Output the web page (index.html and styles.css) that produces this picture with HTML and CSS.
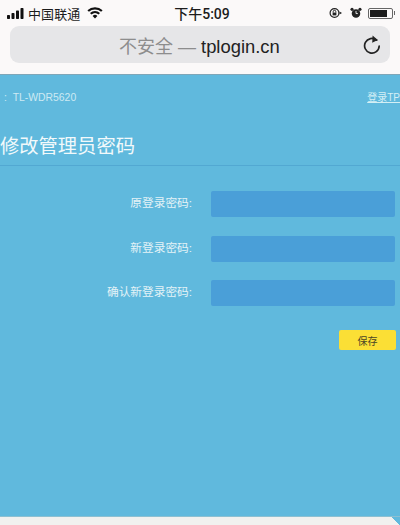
FILE: index.html
```html
<!DOCTYPE html>
<html lang="zh">
<head>
<meta charset="utf-8">
<title>tplogin.cn</title>
<link rel="stylesheet" href="styles.css">
</head>
<body>
<div class="phone">
  <header class="chrome">
    <div class="status">
      <div class="status-left">
        <svg class="signal" width="18" height="11" viewBox="0 0 18 11"><rect x="0" y="7" width="3" height="4" rx=".7"/><rect x="4.5" y="5" width="3" height="6" rx=".7"/><rect x="9" y="2.5" width="3" height="8.5" rx=".7"/><rect x="13.5" y="0" width="3" height="11" rx=".7"/></svg>
        <span class="carrier">中国联通</span>
        <svg class="wifi" width="16" height="12" viewBox="0 0 16 12"><path d="M8 11.6 5.6 8.9a3.5 3.5 0 0 1 4.8 0Z"/><path d="M4.4 7.6 3 6a7.4 7.4 0 0 1 10 0l-1.4 1.6a5.4 5.4 0 0 0-7.2 0Z"/><path d="M1.9 4.8.4 3.2a11.2 11.2 0 0 1 15.2 0l-1.5 1.6a9 9 0 0 0-12.2 0Z"/></svg>
      </div>
      <span class="time">下午5:09</span>
      <div class="status-right">
        <svg width="13" height="12" viewBox="0 0 13 12"><circle cx="5.5" cy="6" r="4.4" fill="none" stroke="#222" stroke-width="1.2"/><rect x="3.6" y="5.6" width="3.8" height="2.8" fill="#222"/><path d="M4.2 5.6V4.6a1.3 1.3 0 0 1 2.6 0v1" fill="none" stroke="#222"/><path d="M10.5 4.5 13 6l-2.5 1.5Z" fill="#222"/></svg>
        <svg width="12" height="12" viewBox="0 0 13 12"><circle cx="6.5" cy="6.5" r="4.6" fill="#222"/><circle cx="2.2" cy="2" r="1.7" fill="#222"/><circle cx="10.8" cy="2" r="1.7" fill="#222"/><path d="M6.5 3.8v2.8h2" fill="none" stroke="#fff" stroke-width=".9"/></svg>
        <div class="battery"><div class="battery-fill"></div></div>
        <div class="battery-cap"></div>
      </div>
    </div>
    <div class="address">
      <div class="url"><span class="insecure">不安全 — </span><span class="domain">tplogin.cn</span></div>
      <svg class="reload" width="18" height="20" viewBox="0 0 18 20"><path d="M13.6 5.2A7.3 7.3 0 1 0 16.2 11" fill="none" stroke="#222" stroke-width="1.7" stroke-linecap="round"/><path d="M9.6 0.6 14.8 4.9 9.2 7.8Z" fill="#222"/></svg>
    </div>
  </header>
  <main class="page">
    <div class="topline">
      <span class="model">:&nbsp;&nbsp;TL-WDR5620</span>
      <a class="login-link">登录TP</a>
    </div>
    <h1 class="title">修改管理员密码</h1>
    <form class="form">
      <div class="row"><label class="label">原登录密码:</label><div class="input"></div></div>
      <div class="row"><label class="label">新登录密码:</label><div class="input"></div></div>
      <div class="row"><label class="label">确认新登录密码:</label><div class="input"></div></div>
      <div class="actions"><button type="button" class="save">保存</button></div>
    </form>
  </main>
  <div class="bottom"><div class="corner"></div></div>
</div>
</body>
</html>
```
FILE: styles.css
```css
* { box-sizing: border-box; }
html, body { margin: 0; padding: 0; }
body {
  width: 400px;
  height: 525px;
  overflow: hidden;
  font-family: "Liberation Sans", "Noto Sans CJK SC", sans-serif;
  background: #f1f1ef;
}
.phone { display: flex; flex-direction: column; width: 400px; height: 525px; overflow: hidden; }

.chrome { height: 75px; flex: none; background: #fbf9f9; border-bottom: 1px solid #7fa6b8; }
.status {
  height: 25px;
  padding: 1px 5px 0 7px;
  display: grid;
  grid-template-columns: 1fr auto 1fr;
  align-items: center;
  color: #1c1c1c;
}
.status-left { display: flex; align-items: center; }
.signal { fill: #111; margin-right: 3px; }
.carrier { font-size: 13px; letter-spacing: .1px; }
.wifi { fill: #111; margin-left: 7px; }
.time { font-family: Roboto, "Noto Sans CJK SC", sans-serif; font-size: 14px; font-weight: 500; margin-left: 2px; }
.status-right { display: flex; align-items: center; justify-content: flex-end; }
.status-right svg { margin-right: 7px; }
.status-right svg:first-child { margin-right: 8px; }
.battery {
  width: 25px;
  height: 11px;
  border: 1px solid #666;
  border-radius: 2px;
  padding: 1px;
  margin-left: -1px;
}
.battery-fill { width: 17px; height: 100%; background: #1c1c1c; }
.battery-cap { width: 1px; height: 4px; margin-left: 1px; background: #666; }

.address {
  height: 37px;
  margin: 1px 10px 0;
  padding: 0 9px 0 0;
  background: #e6e6e8;
  border-radius: 9px;
  display: flex;
  align-items: center;
}
.url { flex: 1; padding-left: 109px; font-size: 18.4px; white-space: nowrap; }
.insecure { color: #8d8d8d; font-size: 18px; }
.domain { color: #222; }
.reload { flex: none; margin-top: 1px; }

.page {
  flex: 1;
  background: #60b9dd;
  color: #eef8fb;
  min-height: 0;
}
.topline {
  height: 45px;
  padding: 17px 0 0 4px;
  display: flex;
  justify-content: space-between;
  font-size: 10.4px;
  line-height: 12px;
  white-space: nowrap;
}
.model { color: #cdeaf3; }
.login-link { color: #d4eff5; text-decoration: underline; font-size: 10px; }
.title {
  margin: 0;
  height: 46px;
  padding-top: 14px;
  font-size: 19.3px;
  line-height: 26px;
  font-weight: 400;
  border-bottom: 1px solid #52a8d2;
  color: #f2f9fb;
}
.form { padding: 25px 5px 0 0; }
.row { display: flex; align-items: flex-start; height: 26px; margin-bottom: 18.5px; line-height: 24px; }
.label { width: 192px; flex: none; text-align: right; font-size: 11.7px; color: #e4f3f7; }
.input { margin-left: 19px; flex: 1; height: 26px; border-radius: 2px; background: #4a9fd8; }
.actions { display: flex; justify-content: flex-end; margin: 24px -1px 0 0; }
.save {
  width: 57px;
  height: 20px;
  padding: 0;
  border: 0;
  border-radius: 2px;
  background: #fbdf35;
  color: #4a4526;
  font: 10px "Liberation Sans", "Noto Sans CJK SC", sans-serif;
}
.bottom {
  height: 9px;
  flex: none;
  display: flex;
  justify-content: flex-end;
  background: #f1f1ef;
  border-top: 1px solid #8cc0d2;
}
.corner { width: 8px; height: 100%; background: linear-gradient(to top right, transparent 50%, #60b9dd 50%); }
```
